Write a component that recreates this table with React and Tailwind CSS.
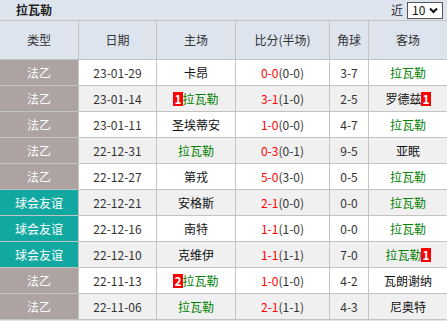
import React from "react";

const rows = [
  { type: "法乙", date: "23-01-29", home: "卡昂", score: "0-0", half: "(0-0)", corner: "3-7", away: "拉瓦勒" },
  { type: "法乙", date: "23-01-14", home: "拉瓦勒", homeRed: "1", score: "3-1", half: "(1-0)", corner: "2-5", away: "罗德兹", awayRed: "1" },
  { type: "法乙", date: "23-01-11", home: "圣埃蒂安", score: "1-0", half: "(0-0)", corner: "4-7", away: "拉瓦勒" },
  { type: "法乙", date: "22-12-31", home: "拉瓦勒", score: "0-3", half: "(0-1)", corner: "9-5", away: "亚眠" },
  { type: "法乙", date: "22-12-27", home: "第戎", score: "5-0", half: "(3-0)", corner: "0-5", away: "拉瓦勒" },
  { type: "球会友谊", date: "22-12-21", home: "安格斯", score: "2-1", half: "(0-0)", corner: "0-0", away: "拉瓦勒" },
  { type: "球会友谊", date: "22-12-16", home: "南特", score: "1-1", half: "(1-0)", corner: "0-0", away: "拉瓦勒" },
  { type: "球会友谊", date: "22-12-10", home: "克维伊", score: "1-1", half: "(1-1)", corner: "7-0", away: "拉瓦勒", awayRed: "1" },
  { type: "法乙", date: "22-11-13", home: "拉瓦勒", homeRed: "2", score: "1-0", half: "(1-0)", corner: "4-2", away: "瓦朗谢纳" },
  { type: "法乙", date: "22-11-06", home: "拉瓦勒", score: "2-1", half: "(1-1)", corner: "4-3", away: "尼奥特" },
];

const RedCard = ({ n }) => (
  <span className="inline-block bg-[#ff0000] px-px text-[12px] font-bold leading-[14px] text-white">
    {n}
  </span>
);

const Team = ({ name, red, side }) => (
  <span className={name === "拉瓦勒" ? "text-[#008000]" : "text-[#111]"}>
    {side === "home" && red && <RedCard n={red} />}
    {name}
    {side === "away" && red && <RedCard n={red} />}
  </span>
);

export default function App() {
  const font = { fontFamily: '"Noto Sans CJK SC", "Noto Sans", sans-serif' };
  return (
    <div className="h-[321px] w-[447px] overflow-hidden bg-[#dde4ee] text-[12px] text-[#333]" style={font}>
      <div className="flex h-[21px] items-center justify-between border-b border-[#c3c3c3] pl-4 pr-1">
        <span className="text-[12px] font-bold text-[#222]">拉瓦勒</span>
        <div className="flex items-center gap-1">
          <span className="text-[12px] text-[#333]">近</span>
          <div className="flex h-[17px] w-[36px] items-center justify-between border border-[#555] bg-white px-1 text-[12px] text-[#111]">
            <span>10</span>
            <svg width="9" height="7" viewBox="0 0 9 7">
              <path d="M1 1.5 L4.5 5 L8 1.5" stroke="#111" strokeWidth="2" fill="none" />
            </svg>
          </div>
        </div>
      </div>
      <div className="grid grid-cols-[78px_77px_78px_93px_38px_78px] gap-px bg-[#c3c3c3] pb-px">
        {["类型", "日期", "主场", "比分(半场)", "角球", "客场"].map((h) => (
          <div key={h} className="flex h-[38px] items-center justify-center bg-[#dde4ee] text-[#333]">
            {h}
          </div>
        ))}
        {rows.map((r, i) => {
          const bg = i % 2 === 0 ? "bg-white" : "bg-[#f0f0f0]";
          const typeBg = r.type === "法乙" ? "bg-[#aca3a2]" : "bg-[#12a8a2]";
          return (
            <React.Fragment key={r.date}>
              <div className={`flex h-[25px] items-center justify-center text-white ${typeBg}`}>{r.type}</div>
              <div className={`flex h-[25px] items-center justify-center ${bg}`}>{r.date}</div>
              <div className={`flex h-[25px] items-center justify-center ${bg}`}>
                <Team name={r.home} red={r.homeRed} side="home" />
              </div>
              <div className={`flex h-[25px] items-center justify-center ${bg}`}>
                <span className="text-[#ff0000]">{r.score}</span>
                <span>{r.half}</span>
              </div>
              <div className={`flex h-[25px] items-center justify-center ${bg}`}>{r.corner}</div>
              <div className={`flex h-[25px] items-center justify-center ${bg}`}>
                <Team name={r.away} red={r.awayRed} side="away" />
              </div>
            </React.Fragment>
          );
        })}
      </div>
    </div>
  );
}
